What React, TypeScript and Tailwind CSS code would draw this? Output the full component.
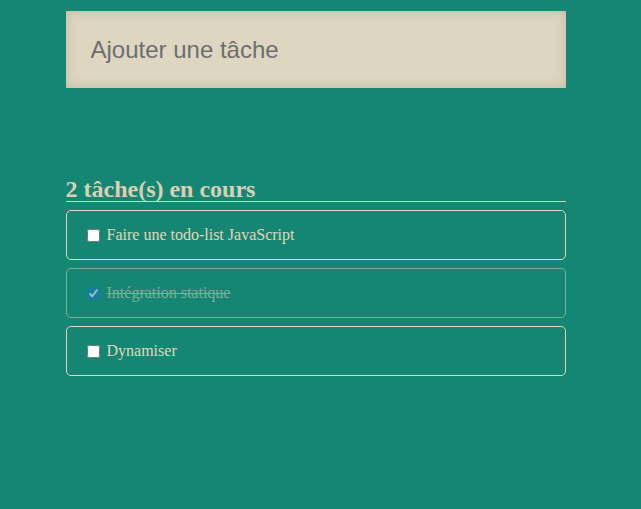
import React, { useState } from "react";

export default function App() {
  const [tasks, setTasks] = useState([
    { id: 1, text: "Faire une todo-list JavaScript", done: false },
    { id: 2, text: "Intégration statique", done: true },
    { id: 3, text: "Dynamiser", done: false },
  ]);
  const remaining = tasks.filter((t) => !t.done).length;
  return (
    <div className="min-h-[509px] w-full bg-[#168674] pt-[11px]">
      <div className="mx-auto w-[500px] translate-x-[-5px]">
        <input
          type="text"
          placeholder="Ajouter une tâche"
          className="block h-[77px] w-full bg-[#ddd6c1] px-[25px] text-[24px] text-[#6e6e6e] outline-none shadow-[inset_0_0_12px_rgba(120,100,60,0.25)] placeholder:text-[#6e6e6e] [font-family:'Liberation_Sans',Arial,sans-serif]"
        />
        <h2 className="mt-[89px] border-b border-[#d9d0b4] text-[24px] font-bold leading-[24px] text-[#d9d0b4] [font-family:'Liberation_Serif','Times_New_Roman',serif]">
          {remaining} tâche(s) en cours
        </h2>
        <ul className="mt-[8px] flex flex-col gap-[8px] [font-family:'Liberation_Serif','Times_New_Roman',serif]">
          {tasks.map((t) => (
            <li
              key={t.id}
              className={
                "flex h-[50px] items-center rounded-[5px] border border-[#e0d6b8] px-[16px] text-[16px] text-[#e0d6b8] " +
                (t.done ? "opacity-50" : "")
              }
            >
              <label className="flex items-center">
                <input
                  type="checkbox"
                  checked={t.done}
                  onChange={() =>
                    setTasks(tasks.map((x) => (x.id === t.id ? { ...x, done: !x.done } : x)))
                  }
                  className="ml-[4px] mr-[7px] h-[13px] w-[13px] accent-[#1a73c8]"
                />
                <span className={t.done ? "line-through" : ""}>{t.text}</span>
              </label>
            </li>
          ))}
        </ul>
      </div>
    </div>
  );
}
